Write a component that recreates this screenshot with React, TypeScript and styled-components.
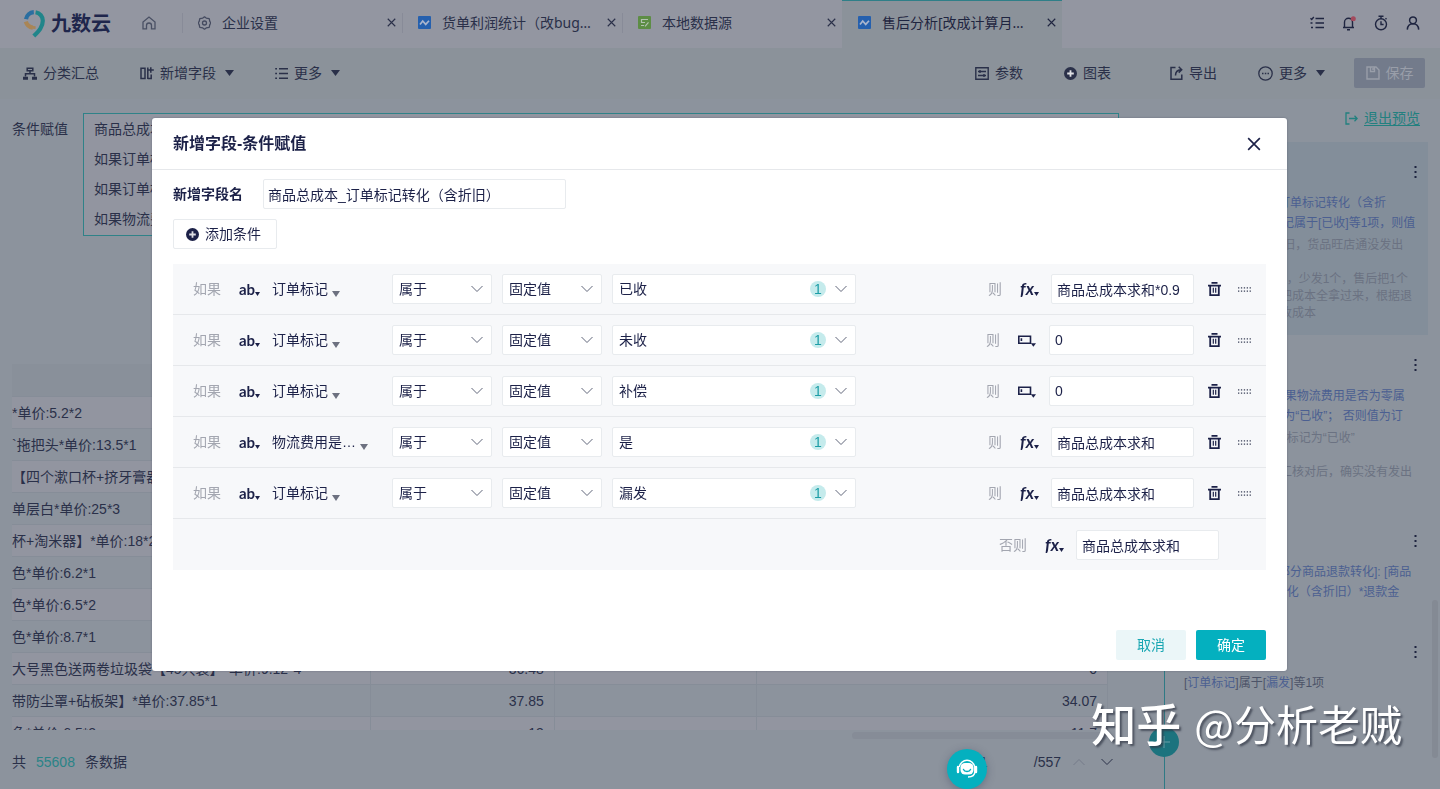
import React from "react";
import styled, { createGlobalStyle } from "styled-components";

const c = {
  ink: "#1c2148",
  dimInk: "#2a3049",
  dimHeader: "#9396a1",
  dimBar: "#8b929a",
  dimMain: "#8c939d",
  dimStripe: "#9295a0",
  dimLine: "#868d98",
  dimTeal: "#2a8387",
  dimBlue: "#4b5f91",
  dimGrey: "#6b7282",
  teal: "#04b0bf",
  line: "#e8ebee",
};

const GlobalStyle = createGlobalStyle`
  * { box-sizing: border-box; }
  body {
    margin: 0;
    font-family: "Liberation Sans", "Noto Sans CJK SC", sans-serif;
    font-size: 14px;
    line-height: 20px;
    color: ${c.dimInk};
  }
  button, input, select { font: inherit; color: inherit; }
  button { padding: 0; border: 0; background: none; cursor: pointer; }
  svg { display: block; flex: none; }
`;

/* ---------- page shell ---------- */

const Page = styled.div`
  display: flex;
  flex-direction: column;
  height: 100vh;
  overflow: hidden;
  background: ${c.dimMain};
`;

const TopBar = styled.header`
  display: flex;
  align-items: stretch;
  flex: none;
  height: 48px;
  background: ${c.dimHeader};
`;

const Brand = styled.div`
  display: flex;
  align-items: center;
  gap: 4px;
  width: 142px;
  padding: 0 0 2px 23px;
`;

const BrandName = styled.span`
  font: 700 20px/28px "Noto Sans CJK SC", sans-serif;
  color: #1f264c;
`;

const HomeButton = styled.button`
  display: flex;
  align-items: center;
  width: 40px;
  padding-bottom: 2px;
  color: #4a5064;
`;

const Tab = styled.div<{ $active?: boolean }>`
  display: flex;
  align-items: center;
  gap: 11px;
  flex: 0 1 220px;
  min-width: 0;
  padding: 0 4px 3px 16px;
  color: ${(p) => (p.$active ? "#1f2540" : c.dimInk)};
  background: ${(p) => (p.$active ? c.dimBar : "transparent")};
  box-shadow: ${(p) => (p.$active ? "inset 0 1px 0 #2f7f88" : "none")};
  font-family: "Noto Sans", "Noto Sans CJK SC", sans-serif;
  &::before {
    content: "";
    width: 1px;
    height: 20px;
    margin: 0 4px 0 -16px;
    background: ${(p) => (p.$active ? "transparent" : "#888b98")};
  }
`;

const TabName = styled.span`
  flex: 1;
  white-space: nowrap;
`;

const IconButton = styled.button<{ $size?: number }>`
  display: grid;
  place-items: center;
  width: ${(p) => p.$size ?? 20}px;
  height: ${(p) => p.$size ?? 20}px;
`;

const TopActions = styled.nav`
  display: flex;
  align-items: center;
  gap: 12px;
  margin-left: auto;
  padding: 0 17px 2px 0;
  color: #1f2540;
`;

const Toolbar = styled.div`
  display: flex;
  align-items: center;
  gap: 29px;
  flex: none;
  height: 51px;
  padding: 0 15px 1px 23px;
  background: ${c.dimBar};
`;

const ToolGroup = styled.div<{ $end?: boolean }>`
  display: flex;
  align-items: center;
  gap: 41px;
  margin-left: ${(p) => (p.$end ? "auto" : "0")};
`;

const Tool = styled.button<{ $apart?: boolean }>`
  display: flex;
  align-items: center;
  gap: 6px;
  margin-right: ${(p) => (p.$apart ? 18 : 0)}px;
  white-space: nowrap;
  span + svg { margin-left: 3px; }
`;

const SaveButton = styled(Tool)`
  justify-content: center;
  width: 71px;
  height: 30px;
  color: #999ea9;
  background: #737b8b;
  border-radius: 2px;
`;

const Body = styled.div`
  display: grid;
  grid-template-columns: minmax(0, 1fr) 300px;
  flex: 1;
  min-height: 0;
`;

/* ---------- left: condition summary and data table ---------- */

const Workspace = styled.main`
  display: flex;
  flex-direction: column;
  min-width: 0;
`;

const Summary = styled.section`
  display: flex;
  align-items: flex-start;
  flex: 1;
  gap: 15px;
  padding: 14px 21px 0 12px;
`;

const SummaryLabel = styled.h2`
  margin: 0;
  font: inherit;
  line-height: 32px;
`;

const SummaryBox = styled.div`
  flex: 1;
  padding: 0 10px 1px;
  border: 1px solid #2f8288;
  background: ${c.dimStripe};
  p { margin: 0; line-height: 30px; }
`;

const TableView = styled.div`
  flex: none;
  height: 366px;
  margin: 0 32px 0 12px;
  overflow: hidden;
`;

const Table = styled.table`
  width: 100%;
  table-layout: fixed;
  border-collapse: collapse;
  th, td {
    height: 32px;
    padding: 1px 10px 0 0;
    overflow: hidden;
    white-space: nowrap;
    text-align: right;
    border-right: 1px solid ${c.dimLine};
    border-bottom: 1px solid ${c.dimLine};
  }
  td:first-child { text-align: left; padding: 1px 0 0; }
  th { background: #89909a; border-right: 0; }
  tbody tr:nth-child(odd) { background: ${c.dimStripe}; }
`;

const ScrollTrack = styled.div`
  display: flex;
  justify-content: flex-end;
  flex: none;
  height: 10px;
  margin-right: 32px;
  &::after { content: ""; width: 256px; height: 7px; margin-top: 2px; border-radius: 4px; background: #868c97; }
`;

const TableFooter = styled.footer`
  display: flex;
  align-items: center;
  flex: none;
  height: 49px;
  padding: 0 23px 6px 12px;
`;

const Count = styled.span`
  margin: 0 10px;
  color: ${c.dimTeal};
`;

const Pager = styled.div`
  display: flex;
  align-items: center;
  gap: 8px;
  margin-left: auto;
`;

const PageInput = styled.input`
  width: 58px;
  height: 24px;
  padding: 0 12px;
  border: 0;
  background: none;
`;

const PageButton = styled(IconButton)`
  &:disabled { color: #747b89; }
`;

/* ---------- right: history panel ---------- */

const Panel = styled.aside`
  position: relative;
  display: flex;
  flex-direction: column;
  min-width: 0;
  padding-right: 12px;
  overflow: hidden;
  &::before {
    content: "";
    position: absolute;
    top: 43px;
    bottom: 0;
    left: 24px;
    width: 1px;
    background: #2f7a85;
  }
`;

const ExitRow = styled.div`
  display: flex;
  align-items: center;
  justify-content: flex-end;
  gap: 6px;
  flex: none;
  height: 43px;
  padding: 0 8px 5px 0;
  color: #22807f;
  a { color: inherit; text-underline-offset: 2px; }
`;

const Card = styled.article<{ $selected?: boolean }>`
  flex: none;
  min-height: 111px;
  margin-left: 36px;
  padding: 20px 3px 13px 8px;
  font-size: 12px;
  white-space: nowrap;
  color: ${c.dimBlue};
  background: ${(p) => (p.$selected ? "#838e9a" : "transparent")};
  p { margin: 0; line-height: 20px; }
`;

const CardHead = styled.div`
  display: flex;
  justify-content: flex-end;
  height: 31px;
  color: #1f2540;
`;

const Note = styled.div`
  margin-top: 4px;
  line-height: 17px;
  color: ${c.dimGrey};
  white-space: pre;
`;

const Dark = styled.span`
  color: #4c5368;
`;

const AddStep = styled.button`
  position: absolute;
  left: 9px;
  bottom: 32px;
  display: grid;
  place-items: center;
  width: 30px;
  height: 30px;
  border-radius: 50%;
  color: #6aa0a8;
  background: #1c737e;
`;

const PanelThumb = styled.div`
  position: absolute;
  right: 2px;
  bottom: 31px;
  width: 6px;
  height: 158px;
  border-radius: 3px;
  background: #848a94;
`;

/* ---------- dialog ---------- */

const Overlay = styled.div`
  position: fixed;
  inset: 0;
  display: grid;
  place-items: center;
  padding: 0 153px 0 152px;
`;

const Dialog = styled.section`
  display: flex;
  flex-direction: column;
  width: 100%;
  min-height: 553px;
  max-width: 1600px;
  color: ${c.ink};
  background: #fff;
  border-radius: 3px;
  box-shadow: 0 0 2px rgba(40, 45, 70, 0.4);
`;

const DialogHead = styled.header`
  display: flex;
  align-items: center;
  justify-content: space-between;
  height: 52px;
  padding: 1px 23px 0 21px;
  border-bottom: 1px solid #e6e8eb;
  h1 { margin: 0; font-size: 16px; font-weight: 700; line-height: 24px; }
`;

const DialogBody = styled.div`
  display: flex;
  flex-direction: column;
  align-items: flex-start;
  gap: 10px;
  padding: 9px 21px 0;
`;

const NameRow = styled.div`
  display: flex;
  align-items: center;
  gap: 20px;
  label { font-weight: 700; }
`;

const TextInput = styled.input<{ $width: number; $pad?: number }>`
  width: ${(p) => p.$width}px;
  height: 30px;
  padding: 0 ${(p) => p.$pad ?? 5}px;
  border: 1px solid ${c.line};
  border-radius: 2px;
  background: #fff;
  outline: 0;
`;

const AddButton = styled.button`
  display: flex;
  align-items: center;
  gap: 6px;
  height: 30px;
  padding: 0 15px 0 12px;
  border: 1px solid ${c.line};
  border-radius: 2px;
  background: #fff;
`;

const Rules = styled.div`
  width: 100%;
  margin-top: 5px;
  background: #f7f8fa;
`;

const Rule = styled.div`
  display: grid;
  grid-template-columns: 36px 23px 110px 100px 100px 244px 1fr 20px 20px;
  align-items: center;
  column-gap: 10px;
  height: 51px;
  padding: 0 12px 0 20px;
  border-bottom: 1px solid #e6e8eb;
`;

const ElseRule = styled.div`
  display: flex;
  align-items: center;
  justify-content: flex-end;
  height: 51px;
  padding-right: 47px;
`;

const Muted = styled.span`
  color: #a3a6b0;
`;

const TypeButton = styled.button<{ $italic?: boolean }>`
  display: flex;
  align-items: center;
  height: 24px;
  font-family: Lato, sans-serif;
  font-size: ${(p) => (p.$italic ? 17 : 15)}px;
  font-weight: 700;
  font-style: ${(p) => (p.$italic ? "italic" : "normal")};
  svg { margin-top: 10px; }
`;

const FieldButton = styled.button`
  display: flex;
  align-items: center;
  gap: 4px;
  height: 24px;
  white-space: nowrap;
  svg { margin-top: 10px; }
`;

const SelectBox = styled.div`
  position: relative;
  select {
    width: 100%;
    height: 30px;
    padding: 0 30px 0 6px;
    appearance: none;
    border: 1px solid ${c.line};
    border-radius: 2px;
    background: #fff;
    outline: 0;
  }
  > svg {
    position: absolute;
    top: 11px;
    right: 9px;
    color: #61667a;
    pointer-events: none;
  }
`;

const Badge = styled.span`
  position: absolute;
  top: 7px;
  right: 30px;
  width: 16px;
  height: 16px;
  border-radius: 50%;
  line-height: 16px;
  text-align: center;
  color: #1c9da6;
  background: #c5ebec;
  pointer-events: none;
`;

const Result = styled.div`
  display: flex;
  align-items: center;
  justify-content: flex-end;
`;

const Kind = styled.div`
  display: flex;
  width: 18px;
  margin: 0 13px 0 18px;
`;

const DialogFoot = styled.footer`
  display: flex;
  justify-content: flex-end;
  gap: 10px;
  margin-top: auto;
  padding: 0 21px 11px;
`;

const Action = styled.button<{ $primary?: boolean }>`
  width: 70px;
  height: 30px;
  border-radius: 2px;
  color: ${(p) => (p.$primary ? "#fff" : "#1aa7b3")};
  background: ${(p) => (p.$primary ? c.teal : "#ebf6f8")};
`;

const ChatBubble = styled.button`
  position: fixed;
  left: calc(100% - 493px);
  bottom: 0;
  display: grid;
  place-items: center;
  width: 40px;
  height: 40px;
  border-radius: 50%;
  color: #fff;
  background: ${c.teal};
  box-shadow: 0 2px 8px rgba(40, 50, 80, 0.35);
`;

const Watermark = styled.div`
  position: fixed;
  right: 38px;
  bottom: 36px;
  display: flex;
  align-items: center;
  gap: 13px;
  font: 400 42px/60px "Noto Sans CJK SC", sans-serif;
  color: #fff;
  text-shadow: 2px 2px 2px rgba(50, 55, 70, 0.7);
  pointer-events: none;
  strong { font-size: 45px; font-weight: 500; }
`;

/* ---------- icons ---------- */

const Caret = ({ w = 9, h = 6, color = "currentColor" }: { w?: number; h?: number; color?: string }) => (
  <svg width={w} height={h} viewBox="0 0 9 6" fill={color} preserveAspectRatio="none"><path d="M0 0h9L4.5 6z" /></svg>
);
const Cross = ({ size, stroke = 1.3 }: { size: number; stroke?: number }) => (
  <svg width={size} height={size} viewBox="0 0 12 12" stroke="currentColor" strokeWidth={stroke}><path d="M1 1l10 10M11 1L1 11" /></svg>
);
const Chevron = ({ up }: { up?: boolean }) => (
  <svg width="12" height="8" viewBox="0 0 12 8" fill="none" stroke="currentColor" strokeWidth="1"><path d={up ? "M.5 7L6 1.5 11.5 7" : "M.5 1L6 6.5 11.5 1"} /></svg>
);
const PlusDisc = () => (
  <svg width="13" height="13" viewBox="0 0 13 13"><circle cx="6.5" cy="6.5" r="6.5" fill="currentColor" /><path d="M6.5 3.2v6.6M3.2 6.5h6.6" stroke="#fff" strokeOpacity=".85" strokeWidth="1.8" /></svg>
);
const Logo = () => (
  <svg width="24" height="29" viewBox="0 0 24 29" fill="none" strokeWidth="4.2">
    <path d="M12.6 3.2A8.6 8.6 0 0 1 19.8 11.8C19.8 18 16 22 10.8 27" stroke="#20858a" />
    <path d="M10.8 3.2A8.600 8.600 0 0 0 3 10.2" stroke="#2a6ea0" />
    <path d="M2.8 12.6A8.600 8.600 0 0 0 9.8 18.6" stroke="#a98555" />
    <path d="M9.6 18.4l3 .2" stroke="#a98555" strokeWidth="2.6" />
  </svg>
);
const Home = () => (
  <svg width="14" height="14" viewBox="0 0 14 14" fill="none" stroke="currentColor" strokeWidth="1.3"><path d="M1 12.9V6L7 1l6 5v6.900H9.500V9.500a2.500 2.500 0 0 0-5 0v3.400z" /></svg>
);
const Gear = () => (
  <svg width="13" height="14" viewBox="0 0 13 14" fill="none" stroke="#454b60" strokeWidth="1.3"><path d="M6.500.8l1.700 1.300 3 .5 .6 2.800 1 1.600-1 1.600-.6 2.800-3 .5-1.700 1.300-1.700-1.300-3-.5-.6-2.800L.2 7l1-1.600.6-2.800 3-.5z" strokeLinejoin="round" /><circle cx="6.500" cy="7" r="2" /></svg>
);
const ChartTile = () => (
  <svg width="13" height="13" viewBox="0 0 13 13"><rect width="13" height="13" rx="1" fill="#2560ae" /><path d="M2 8.500L4.700 5l3 3.400L11 4.800" fill="none" stroke="#a9b5cd" strokeWidth="1.7" /></svg>
);
const SheetTile = () => (
  <svg width="13" height="13" viewBox="0 0 13 13"><rect width="13" height="13" rx="1" fill="#5d8d45" /><path d="M3 3.500h7M3 6.500h4M3 9.500h3M3.500 3v4M7 10.300l3.500-4" fill="none" stroke="#b1c0b0" strokeWidth="1.2" /></svg>
);
const Tasks = () => (
  <svg width="14" height="14" viewBox="0 0 14 14" fill="none" stroke="currentColor" strokeWidth="1.6"><path d="M5.500 2.500H14M5.500 7H14M5.500 11.500H14" /><path d="M.5 2.200l1.200 1.200L3.800 1M.5 7h2M1 11.500h2" strokeWidth="1.4" /></svg>
);
const Bell = () => (
  <svg width="14" height="15" viewBox="0 0 14 15" fill="none" stroke="currentColor" strokeWidth="1.4"><path d="M1 11.500h11M2.500 11.500V6.200a4 4 0 0 1 8 0v5.300M5 13.800h3" /><circle cx="11.3" cy="2.7" r="2.5" fill="#a3495c" stroke="none" /></svg>
);
const Timer = () => (
  <svg width="14" height="16" viewBox="0 0 14 16" fill="none" stroke="currentColor" strokeWidth="1.4"><circle cx="7" cy="9.3" r="5.5" /><path d="M4.500 1.200h5M7 1.200v2.500M7 6.300v3.200h2.600M11.500 3.300l1 1" /></svg>
);
const User = () => (
  <svg width="14" height="14" viewBox="0 0 14 14" fill="none" stroke="currentColor" strokeWidth="1.5"><circle cx="7" cy="4.3" r="3.4" /><path d="M1.300 13.600c.2-3.400 2.200-5.900 5.700-5.900s5.500 2.500 5.700 5.900" /></svg>
);
const Tree = () => (
  <svg width="14" height="13" viewBox="0 0 14 13" fill="none" stroke="currentColor" strokeWidth="1.5"><path d="M4.200 1.200h5.600v2.500H4.200zM7 3.700v3M2.500 9.500V6.700h9v2.800" /><path d="M0 11.200h5M9 11.200h5" strokeWidth="3" /></svg>
);
const AddColumn = () => (
  <svg width="14" height="13" viewBox="0 0 14 13" fill="none" stroke="currentColor" strokeWidth="1.5"><path d="M1 1.200h4v10.200H1zM7.800 11.400h3.400V7.500M7.800.5v11.600M10.800.3v5.400M8.200 3h5.600" /></svg>
);
const Bullets = () => (
  <svg width="13" height="13" viewBox="0 0 13 13" fill="none" stroke="currentColor" strokeWidth="1.6"><path d="M4 1.800H13M4 6.500H13M4 11.200H13M.2 1.800H2M.2 6.500H2M.2 11.200H2" /></svg>
);
const Params = () => (
  <svg width="14" height="13" viewBox="0 0 14 13" fill="none" stroke="currentColor" strokeWidth="1.4"><path d="M.8.8h12.400v11.400H.8zM3 4.500h8M3 8.500h8M5 3v3M9 7v3" /></svg>
);
const Export = () => (
  <svg width="13" height="14" viewBox="0 0 13 14" fill="none" stroke="currentColor" strokeWidth="1.5"><path d="M5.500 1.500H1v11.700h10.800V8.500M5.500 9.500C5.500 6 7 4 11 3.700M8.700.8l3 2.900-3 2.900" /></svg>
);
const MoreCircle = () => (
  <svg width="15" height="15" viewBox="0 0 15 15" fill="none" stroke="currentColor" strokeWidth="1.3"><circle cx="7.5" cy="7.5" r="6.7" /><path d="M4 7.500h1.500M6.800 7.500h1.500M9.500 7.500H11" /></svg>
);
const Disk = () => (
  <svg width="14" height="14" viewBox="0 0 14 14" fill="none" stroke="currentColor" strokeWidth="1.4"><path d="M1 1h9l3 3v9H1zM4.500 1v4.500h4V1M7 2v2" /></svg>
);
const Exit = () => (
  <svg width="13" height="13" viewBox="0 0 13 13" fill="none" stroke="currentColor" strokeWidth="1.3"><path d="M4.500 1H1v11h3.500M4 6.500h8M9.500 3.800l2.700 2.700-2.700 2.700" /></svg>
);
const Dots = () => (
  <svg width="3" height="14" viewBox="0 0 3 14" fill="currentColor"><path d="M.5 1h2v2h-2zM.5 6h2v2h-2zM.5 11h2v2h-2z" /></svg>
);
const Trash = () => (
  <svg width="13" height="14" viewBox="0 0 13 14" fill="none" stroke="currentColor" strokeWidth="1.8"><path d="M3.500.9h6M0 3.600h13M2.200 3.500v9.600h8.600V3.500" /><path d="M5.300 5.800v5M7.700 5.800v5" strokeWidth="1.2" /></svg>
);
const Grip = () => (
  <svg width="13" height="5" viewBox="0 0 13 5" fill="none" stroke="#3b4058" strokeWidth="1.3" strokeDasharray="1.3 1.6"><path d="M0 .8h13M0 4.200h13" /></svg>
);
const ValueBox = () => (
  <svg width="18" height="14" viewBox="0 0 18 14" fill="none" stroke="currentColor" strokeWidth="1.6"><path d="M.8 3.300h11.700v6.900H.8zM3.400 5.300v2.800" /><path d="M12.800 10.300H18l-2.600 3.500z" fill="currentColor" stroke="none" /></svg>
);
const Headset = () => (
  <svg width="22" height="20" viewBox="0 0 22 20" fill="none"><rect x="4.5" y="4" width="13" height="11.500" rx="4.5" fill="#fff" /><path d="M3.200 8A7.900 7.900 0 0 1 18.800 8v5c0 3-2.500 4.800-6.800 5" stroke="#fff" strokeWidth="1.5" /><path d="M2 8v5M20 8v5" stroke="#fff" strokeWidth="2.4" strokeLinecap="round" /><path d="M7.500 10.500c1 2.600 6 2.600 7 0" stroke="#04b0bf" strokeWidth="1.4" strokeLinecap="round" /></svg>
);

/* ---------- data ---------- */

const tabs = [
  { icon: <Gear />, name: "企业设置" },
  { icon: <ChartTile />, name: "货单利润统计（改bug…" },
  { icon: <SheetTile />, name: "本地数据源" },
  { icon: <ChartTile />, name: "售后分析[改成计算月…", active: true },
];

const records = [
  ["*单价:5.2*2", "10.4", "", "9.36"],
  ["`拖把头*单价:13.5*1", "13.5", "", "12.15"],
  ["【四个漱口杯+挤牙膏器】*单价:14*1", "14", "", "12.6"],
  ["单层白*单价:25*3", "75", "", "67.5"],
  ["杯+淘米器】*单价:18*2", "36", "", "32.4"],
  ["色*单价:6.2*1", "6.2", "", "5.58"],
  ["色*单价:6.5*2", "13", "", "11.7"],
  ["色*单价:8.7*1", "8.7", "", "7.83"],
  ["大号黑色送两卷垃圾袋【45只装】*单价:9.12*4", "36.48", "", "0"],
  ["带防尘罩+砧板架】*单价:37.85*1", "37.85", "", "34.07"],
  ["色*单价:6.5*2", "13", "", "11.7"],
];

const rules = [
  { field: "订单标记", value: "已收", fx: true, result: "商品总成本求和*0.9" },
  { field: "订单标记", value: "未收", fx: false, result: "0" },
  { field: "订单标记", value: "补偿", fx: false, result: "0" },
  { field: "物流费用是…", value: "是", fx: true, result: "商品总成本求和" },
  { field: "订单标记", value: "漏发", fx: true, result: "商品总成本求和" },
];

const steps = [
  {
    selected: true,
    lines: ["赋值[商品总成本_订单标记转化（含折", "旧）] : 如果 [订单标记属于[已收]等1项，则值"],
    note: "已收的商品 不算折旧，货品旺店通没发出\n\n例如客户买2个商品，少发1个，售后把1个\n漏发的订单会重新把成本全拿过来，根据退\n款金额比例算出实收成本",
  },
  {
    lines: ["[订单标记转化] : 如果物流费用是否为零属", "于是，则 订单标记为“已收”； 否则值为订"],
    note: "物流费用是零, 则订标记为“已收”\n\n漏发的订单由仓库工核对后，确实没有发出\n ",
  },
  { lines: ["[漏发标记已收后_部分商品退款转化]: [商品", "总成本_订单标记转化（含折旧）*退款金"] },
];

const Select = ({ label, value, badge }: { label: string; value: string; badge?: number }) => (
  <SelectBox>
    <select aria-label={label} defaultValue={value}><option>{value}</option></select>
    {badge && <Badge>{badge}</Badge>}
    <Chevron />
  </SelectBox>
);

const FormulaButton = () => (
  <TypeButton $italic aria-label="公式">fx<Caret w={5} h={4} /></TypeButton>
);

export default function App() {
  return (
    <>
      <GlobalStyle />
      <Page>
        <TopBar>
          <Brand><Logo /><BrandName>九数云</BrandName></Brand>
          <HomeButton aria-label="首页"><Home /></HomeButton>
          {tabs.map((t) => (
            <Tab key={t.name} $active={t.active}>
              {t.icon}
              <TabName>{t.name}</TabName>
              <IconButton $size={14} aria-label="关闭标签"><Cross size={9} stroke={1.5} /></IconButton>
            </Tab>
          ))}
          <TopActions>
            <IconButton aria-label="任务"><Tasks /></IconButton>
            <IconButton aria-label="消息"><Bell /></IconButton>
            <IconButton aria-label="定时"><Timer /></IconButton>
            <IconButton aria-label="账户"><User /></IconButton>
          </TopActions>
        </TopBar>

        <Toolbar>
          <ToolGroup>
            <Tool><Tree /><span>分类汇总</span></Tool>
            <Tool><AddColumn /><span>新增字段</span><Caret /></Tool>
            <Tool><Bullets /><span>更多</span><Caret /></Tool>
          </ToolGroup>
          <ToolGroup $end>
            <Tool><Params /><span>参数</span></Tool>
            <Tool $apart><PlusDisc /><span>图表</span></Tool>
            <Tool><Export /><span>导出</span></Tool>
            <Tool><MoreCircle /><span>更多</span><Caret /></Tool>
          </ToolGroup>
          <SaveButton disabled><Disk /><span>保存</span></SaveButton>
        </Toolbar>

        <Body>
          <Workspace>
            <Summary>
              <SummaryLabel>条件赋值</SummaryLabel>
              <SummaryBox>
                <p>商品总成本_订单标记转化（含折旧）</p>
                <p>如果订单标记属于已收，则值为商品总成本求和*0.9</p>
                <p>如果订单标记属于未收，则值为0</p>
                <p>如果物流费用是否为零属于是，则值为商品总成本求和</p>
              </SummaryBox>
            </Summary>
            <TableView>
              <Table>
                <colgroup>
                  <col style={{ width: "32.7%" }} />
                  <col style={{ width: "16.8%" }} />
                  <col style={{ width: "18.5%" }} />
                  <col />
                </colgroup>
                <thead><tr><th /><th /><th /><th /></tr></thead>
                <tbody>
                  {records.map((r, i) => (
                    <tr key={i}>{r.map((v, j) => <td key={j}>{v}</td>)}</tr>
                  ))}
                </tbody>
              </Table>
            </TableView>
            <ScrollTrack />
            <TableFooter>
              共<Count>55608</Count>条数据
              <Pager>
                <PageInput aria-label="页码" defaultValue="1" />
                <span>/557</span>
                <PageButton aria-label="上一页" disabled><Chevron up /></PageButton>
                <PageButton aria-label="下一页"><Chevron /></PageButton>
              </Pager>
            </TableFooter>
          </Workspace>

          <Panel>
            <ExitRow><Exit /><a href="#exit">退出预览</a></ExitRow>
            {steps.map((s, i) => (
              <Card key={i} $selected={s.selected}>
                <CardHead><IconButton aria-label="更多操作"><Dots /></IconButton></CardHead>
                {s.lines.map((l) => <p key={l}>{l}</p>)}
                {s.note && <Note>{s.note}</Note>}
              </Card>
            ))}
            <Card>
              <CardHead><IconButton aria-label="更多操作"><Dots /></IconButton></CardHead>
              <p><Dark>[</Dark>订单标记<Dark>]属于[</Dark>漏发<Dark>]等1项</Dark></p>
            </Card>
            <AddStep aria-label="添加步骤">
              <svg width="12" height="12" viewBox="0 0 12 12" stroke="currentColor"><path d="M6 0v12M0 6h12" /></svg>
            </AddStep>
            <PanelThumb />
          </Panel>
        </Body>
      </Page>

      <Overlay>
        <Dialog role="dialog" aria-labelledby="dialog-title">
          <DialogHead>
            <h1 id="dialog-title">新增字段-条件赋值</h1>
            <IconButton aria-label="关闭"><Cross size={14} stroke={1.4} /></IconButton>
          </DialogHead>
          <DialogBody>
            <NameRow>
              <label htmlFor="field-name">新增字段名</label>
              <TextInput id="field-name" $width={303} $pad={4} defaultValue="商品总成本_订单标记转化（含折旧）" />
            </NameRow>
            <AddButton><PlusDisc />添加条件</AddButton>
            <Rules>
              {rules.map((r, i) => (
                <Rule key={i}>
                  <Muted>如果</Muted>
                  <TypeButton aria-label="文本">ab<Caret w={5} h={4} /></TypeButton>
                  <FieldButton>{r.field}<Caret w={8} h={6} color="#6d7180" /></FieldButton>
                  <Select label="条件" value="属于" />
                  <Select label="取值方式" value="固定值" />
                  <Select label="取值" value={r.value} badge={1} />
                  <Result>
                    <Muted>则</Muted>
                    <Kind>{r.fx ? <FormulaButton /> : <IconButton aria-label="数值"><ValueBox /></IconButton>}</Kind>
                    <TextInput aria-label="结果" $width={r.fx ? 143 : 145} defaultValue={r.result} />
                  </Result>
                  <IconButton aria-label="删除"><Trash /></IconButton>
                  <IconButton aria-label="拖动排序"><Grip /></IconButton>
                </Rule>
              ))}
              <ElseRule>
                <Muted>否则</Muted>
                <Kind><FormulaButton /></Kind>
                <TextInput aria-label="否则结果" $width={143} defaultValue="商品总成本求和" />
              </ElseRule>
            </Rules>
          </DialogBody>
          <DialogFoot>
            <Action>取消</Action>
            <Action $primary>确定</Action>
          </DialogFoot>
        </Dialog>
      </Overlay>

      <ChatBubble aria-label="在线客服"><Headset /></ChatBubble>
      <Watermark><strong>知乎</strong><span>@分析老贼</span></Watermark>
    </>
  );
}
